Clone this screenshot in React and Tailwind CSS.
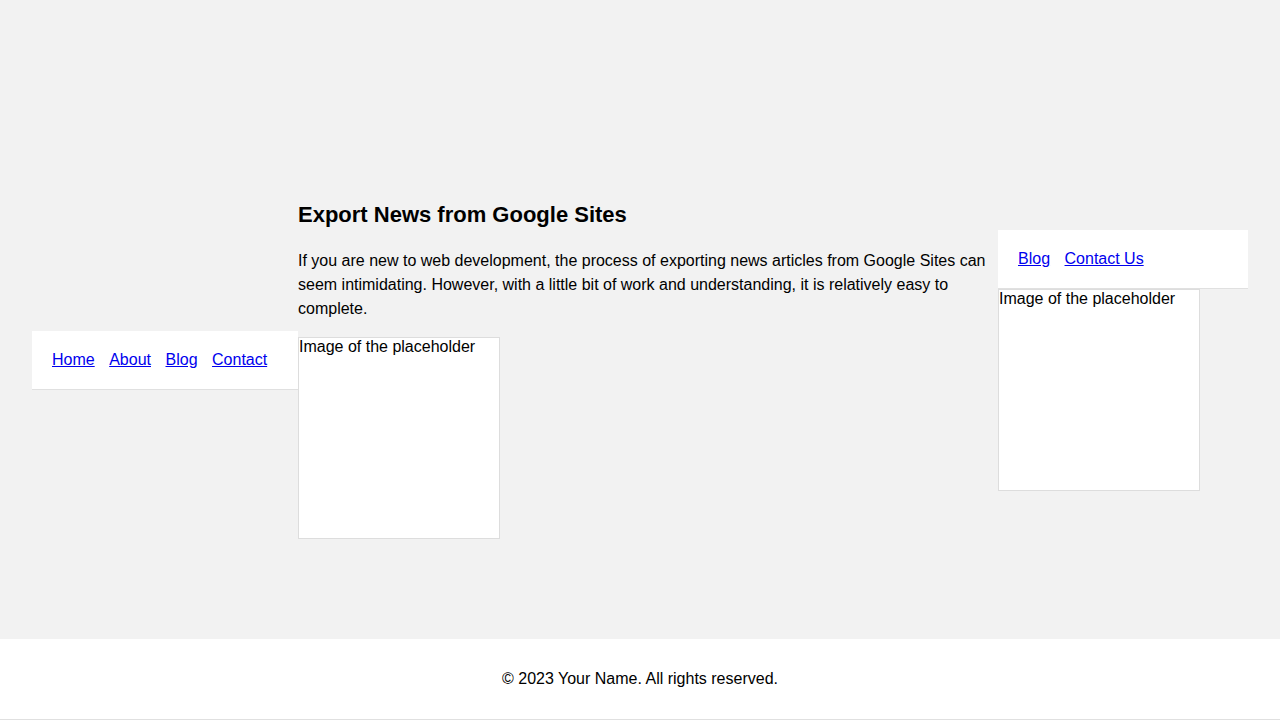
export default function App() {
  return (
    <div className="min-h-screen bg-[#f2f2f2] text-black font-['Liberation_Sans',Arial,sans-serif]">
      <div className="h-screen flex items-center px-8">
        {/* Left nav */}
        <nav className="w-[266px] shrink-0 bg-white border-b border-[#e0e0e0] px-5 py-5 leading-[18px] text-base">
          <a href="#" className="text-[#0000ee] underline mr-[14.5px]">Home</a>
          <a href="#" className="text-[#0000ee] underline mr-[14.5px]">About</a>
          <a href="#" className="text-[#0000ee] underline mr-[14.5px]">Blog</a>
          <a href="#" className="text-[#0000ee] underline">Contact</a>
        </nav>

        {/* Main article */}
        <main className="w-[700px] shrink-0">
          <h2 className="mt-[21px] mb-[22px] text-[22px] leading-[25px] font-bold">
            Export News from Google Sites
          </h2>
          <p className="text-base leading-6 mb-4">
            If you are new to web development, the process of exporting news articles from Google Sites can seem intimidating. However, with a little bit of work and understanding, it is relatively easy to complete.
          </p>
          <div className="w-[202px] h-[202px] bg-white border border-[#dddddd] text-base leading-[18px]">
            Image of the placeholder
          </div>
        </main>

        {/* Right sidebar */}
        <aside className="w-[250px] shrink-0">
          <nav className="bg-white border-b border-[#e0e0e0] px-5 py-5 leading-[18px] text-base">
            <a href="#" className="text-[#0000ee] underline mr-[14.5px]">Blog</a>
            <a href="#" className="text-[#0000ee] underline">Contact Us</a>
          </nav>
          <div className="w-[202px] h-[202px] bg-white border border-[#dddddd] text-base leading-[18px]">
            Image of the placeholder
          </div>
        </aside>
      </div>

      <footer className="fixed bottom-0 left-0 w-full h-[81px] bg-white border-b border-[#e0e0e0] flex items-center justify-center text-base">
        © 2023 Your Name. All rights reserved.
      </footer>
    </div>
  );
}
